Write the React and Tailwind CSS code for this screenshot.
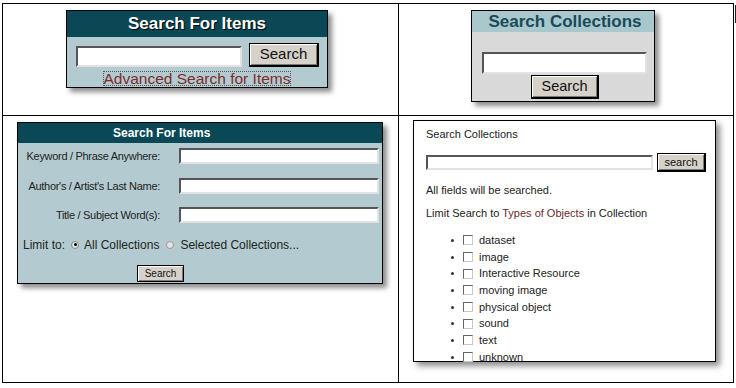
import React from "react"

const font = { fontFamily: '"Liberation Sans", Arial, sans-serif' }

const inputCls = "bg-white border-2 border-t-[#555] border-l-[#555] border-b-[#e2e2e2] border-r-[#e2e2e2]"
const btnCls = "bg-[#d6d2ca] text-[#111] border border-black shadow-[inset_1px_1px_0_#fff,inset_-1px_-1px_0_#7a7a7a] flex items-center justify-center"

function QuickItems() {
  return (
    <div className="w-[262px] h-[78px] border border-black bg-[#b3cbd0] shadow-[4px_4px_5px_rgba(0,0,0,0.45)] flex flex-col">
      <div className="h-[26px] bg-[#0a4855] flex items-center justify-center text-white font-bold text-[17px] [text-shadow:1px_1px_1px_#000]">
        Search For Items
      </div>
      <div className="pt-[6px] pl-[9px] flex items-end gap-[7px]">
        <div className={`w-[166px] h-[21px] ${inputCls}`}></div>
        <button className={`w-[70px] h-[24px] text-[15px] border-r-2 border-b-2 ${btnCls}`}>Search</button>
      </div>
      <div className="flex justify-center mt-[4px]">
        <a href="#" className="text-[#7b2b2b] text-[15.5px] leading-[15px] outline outline-1 outline-dotted outline-[#555] -outline-offset-1 px-[1px]">
          Advanced Search for Items
        </a>
      </div>
    </div>
  )
}

function QuickCollections() {
  return (
    <div className="w-[184px] h-[92px] border border-black bg-[#d9d9d9] shadow-[4px_4px_5px_rgba(0,0,0,0.45)] flex flex-col">
      <div className="h-[21px] bg-[#a8c8cd] flex items-center justify-center text-[#1a4a56] font-bold text-[17px] pl-[4px] whitespace-nowrap">
        Search Collections
      </div>
      <div className={`mt-[20px] ml-[10px] w-[165px] h-[22px] ${inputCls}`}></div>
      <button className={`mt-[1px] ml-[59px] w-[68px] h-[24px] text-[14.5px] border-r-2 border-b-2 ${btnCls}`}>Search</button>
    </div>
  )
}

function AdvancedItems() {
  const rows = ["Keyword / Phrase Anywhere:", "Author's / Artist's Last Name:", "Title / Subject Word(s):"]
  return (
    <div className="w-[366px] h-[162px] border border-black bg-[#b3cbd0] shadow-[4px_4px_5px_rgba(0,0,0,0.45)] flex flex-col">
      <div className="h-[20px] bg-[#0a4855] flex items-center pl-[95px] text-white font-bold text-[12px]">
        Search For Items
      </div>
      <div className="mt-[5px] flex flex-col gap-[13px]">
        {rows.map((r) => (
          <div key={r} className="flex items-center">
            <div className="w-[143px] text-right text-[11px] tracking-[-0.3px] text-[#222] pr-[1px]">{r}</div>
            <div className={`ml-[18px] w-[200px] h-[16px] ${inputCls}`}></div>
          </div>
        ))}
      </div>
      <div className="mt-[14px] pl-[5px] flex items-center text-[12px] leading-[14px] text-[#222]">
        <span>Limit to:</span>
        <span className="ml-[6px] w-[8px] h-[8px] rounded-full bg-[#e4e4e4] border border-[#888] flex items-center justify-center">
          <span className="w-[3px] h-[3px] rounded-full bg-black"></span>
        </span>
        <span className="ml-[5px]">All Collections</span>
        <span className="ml-[7px] w-[8px] h-[8px] rounded-full bg-[#e4e4e4] border border-[#999]"></span>
        <span className="ml-[6px]">Selected Collections...</span>
      </div>
      <button className={`mt-[13px] ml-[119px] w-[47px] h-[17px] text-[10px] ${btnCls}`}>Search</button>
    </div>
  )
}

function AdvancedCollections() {
  const types = ["dataset", "image", "Interactive Resource", "moving image", "physical object", "sound", "text", "unknown"]
  return (
    <div className="w-[303px] h-[242px] border border-black bg-white shadow-[4px_4px_6px_rgba(0,0,0,0.45)] flex flex-col pl-[12px] pt-[7px] text-[11px] leading-[13px] text-[#222]">
      <div>Search Collections</div>
      <div className="mt-[12px] flex items-center gap-[4px]">
        <div className={`w-[227px] h-[15px] ${inputCls}`}></div>
        <button className={`w-[49px] h-[19px] text-[11px] border-r-2 border-b-2 ${btnCls}`}>search</button>
      </div>
      <div className="mt-[12px]">All fields will be searched.</div>
      <div className="mt-[10px]">
        Limit Search to <span className="text-[#6d2a2a]">Types of Objects</span> in Collection
      </div>
      <ul className="mt-[12px] flex flex-col">
        {types.map((t) => (
          <li key={t} className="h-[16.7px] flex items-center">
            <span className="ml-[25px] w-[3px] h-[3px] rounded-full bg-[#333]"></span>
            <span className="ml-[9px] w-[10px] h-[10px] bg-white border border-t-[#666] border-l-[#666] border-b-[#c8c8c8] border-r-[#c8c8c8]"></span>
            <span className="ml-[6px]">{t}</span>
          </li>
        ))}
      </ul>
    </div>
  )
}

export default function App() {
  return (
    <div style={font} className="w-[736px] h-[388px] bg-white flex items-start pt-[3px] pl-[2px]">
      <div className="w-[732px] h-[380px] border border-black grid grid-cols-[396px_334px] grid-rows-[112px_266px]">
        <div className="border-r border-b border-black pl-[63px] pt-[6px]">
          <QuickItems />
        </div>
        <div className="border-b border-black pl-[72px] pt-[6px]">
          <QuickCollections />
        </div>
        <div className="border-r border-black pl-[14px] pt-[6px]">
          <AdvancedItems />
        </div>
        <div className="pl-[14px] pt-[4px]">
          <AdvancedCollections />
        </div>
      </div>
      <div className="ml-[1px] mt-[2px] w-[2px] h-[18px] bg-[#222]"></div>
    </div>
  )
}
